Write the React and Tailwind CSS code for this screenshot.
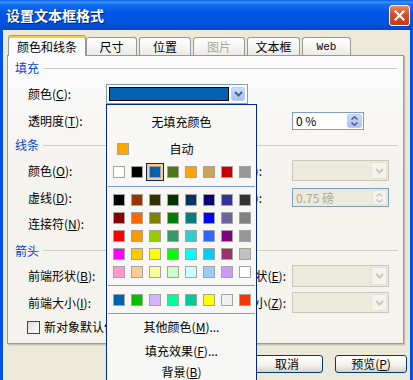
import React from 'react';

const recent = ['#ffffff', '#000000', '#0063b1', '#4e7419', '#ffa500', '#c9a45c', '#c80000', '#999999'];
const grid = [
  ['#000000', '#993300', '#333300', '#003300', '#003366', '#000080', '#333399', '#333333'],
  ['#800000', '#ff6600', '#808000', '#008000', '#008080', '#0000ff', '#666699', '#808080'],
  ['#ff0000', '#ff9900', '#99cc00', '#339966', '#33cccc', '#3366ff', '#800080', '#969696'],
  ['#ff00ff', '#ffcc00', '#ffff00', '#00ff00', '#00ffff', '#00ccff', '#993366', '#c0c0c0'],
  ['#ff99cc', '#ffcc99', '#ffff99', '#ccffcc', '#ccffff', '#99ccff', '#cc99ff', '#ffffff'],
];
const custom = ['#0063b1', '#00c000', '#d4b4ff', '#00ff99', '#00cc99', '#ffff00', '#f0f0f0', '#ff3300'];

const U = ({ c }) => (
  <span>
    (<span className="underline">{c}</span>)
  </span>
);

function Swatch({ color, selected }) {
  return (
    <div className="relative w-[12px] h-[12px]">
      {selected && <div className="absolute -inset-[3px] border border-[#0a246a] bg-[#ffc98a]" />}
      <div className="relative w-[12px] h-[12px] border border-[#a6a39a]" style={{ backgroundColor: color }} />
    </div>
  );
}

function SwatchRow({ colors, selectedIndex, className }) {
  return (
    <div className={'flex gap-[6px] pl-[6px] h-[12px] ' + (className || '')}>
      {colors.map((c, i) => (
        <Swatch key={i} color={c} selected={i === selectedIndex} />
      ))}
    </div>
  );
}

function Chevron({ color }) {
  return (
    <svg width="9" height="6" viewBox="0 0 9 6">
      <path d="M1 1 L4.5 4.5 L8 1" fill="none" stroke={color} strokeWidth="2" />
    </svg>
  );
}

function SpinArrows({ color }) {
  return (
    <div className="flex flex-col items-center gap-[2px]">
      <svg width="7" height="4" viewBox="0 0 7 4">
        <path d="M0.5 3.5 L3.5 0.8 L6.5 3.5" fill="none" stroke={color} strokeWidth="1.5" />
      </svg>
      <svg width="7" height="4" viewBox="0 0 7 4">
        <path d="M0.5 0.5 L3.5 3.2 L6.5 0.5" fill="none" stroke={color} strokeWidth="1.5" />
      </svg>
    </div>
  );
}

function Section({ label, hClass }) {
  return (
    <div className={'flex items-center pl-[7px] pr-[5px] ' + hClass}>
      <span className="text-[#0046d5] whitespace-nowrap">{label}</span>
      <div className="flex-1 h-px bg-[#d0d0bf] ml-[4px]" />
    </div>
  );
}

function Label({ children }) {
  return <div className="w-[78px] shrink-0 whitespace-nowrap">{children}</div>;
}

function DisabledCombo({ hClass }) {
  return (
    <div className={'w-[97px] shrink-0 border border-[#c9c7ba] bg-[#ebeadb] flex justify-end p-[1px] ' + hClass}>
      <div className="w-[16px] h-full rounded-[2px] bg-[#f4f3ee] border border-[#e4e2d6] flex items-center justify-center">
        <Chevron color="#c9c7ba" />
      </div>
    </div>
  );
}

function HiddenCombo({ hClass }) {
  return <div className={'w-[142px] shrink-0 border border-[#c9c7ba] bg-[#ebeadb] ' + hClass} />;
}

function RightLabel({ children, prClass }) {
  return (
    <div className={'w-[44px] shrink-0 flex justify-end whitespace-nowrap ' + prClass}>
      <span>{children}</span>
    </div>
  );
}

function XPButton({ children }) {
  return (
    <div className="h-[18px] w-[72px] rounded-[3px] border border-[#003c74] bg-[linear-gradient(180deg,#ffffff,#f3f2ec_55%,#d8d3c8)] flex items-center justify-center">
      {children}
    </div>
  );
}

export default function App() {
  return (
    <div className="relative w-[413px] h-[380px] overflow-hidden bg-[#0052e0] text-[12px] leading-[14px] text-black font-['Noto_Sans_CJK_SC','Noto_Sans',sans-serif]">
      {/* Title bar */}
      <div className="h-[30px] flex items-center justify-between pl-[6px] pr-[3px] bg-[linear-gradient(180deg,#0a5be5_0%,#3d93f8_7%,#1570f0_15%,#0058e6_40%,#0052dc_80%,#0846c4_100%)]">
        <span className="text-white font-bold text-[14px] [text-shadow:1px_1px_0_#0a1f66]">设置文本框格式</span>
        <div className="w-[21px] h-[21px] rounded-[3px] border border-white bg-[linear-gradient(180deg,#ec8866,#d4502c_45%,#c23c16)] flex items-center justify-center">
          <svg width="11" height="11" viewBox="0 0 11 11">
            <path d="M1.5 1.5 L9.5 9.5 M9.5 1.5 L1.5 9.5" stroke="#ffffff" strokeWidth="2.2" strokeLinecap="square" />
          </svg>
        </div>
      </div>

      {/* Body */}
      <div className="mx-[3px] h-[350px] bg-[#ece9d8] pt-[5px] pl-[4px] pr-[3px]">
        {/* Tabs */}
        <div className="flex items-end h-[20px]">
          <div className="relative z-10 -mb-px ml-[1px] w-[78px] h-[21px] rounded-t-[3px] border-x border-t border-[#919b9c] border-t-[#e68b2c] shadow-[inset_0_2px_0_#ffc73c] bg-[#fcfcfe] flex items-center justify-center pt-[2px]">
            颜色和线条
          </div>
          <div className="w-[51px] h-[18px] rounded-t-[3px] border-x border-t border-[#919b9c] bg-[linear-gradient(180deg,#ffffff,#ecebe6)] flex items-center justify-center">
            尺寸
          </div>
          <div className="ml-[2px] w-[52px] h-[18px] rounded-t-[3px] border-x border-t border-[#919b9c] bg-[linear-gradient(180deg,#ffffff,#ecebe6)] flex items-center justify-center">
            位置
          </div>
          <div className="ml-[2px] w-[52px] h-[18px] rounded-t-[3px] border-x border-t border-[#919b9c] bg-[linear-gradient(180deg,#ffffff,#ecebe6)] flex items-center justify-center text-[#aca899]">
            图片
          </div>
          <div className="ml-[2px] w-[53px] h-[18px] rounded-t-[3px] border-x border-t border-[#919b9c] bg-[linear-gradient(180deg,#ffffff,#ecebe6)] flex items-center justify-center">
            文本框
          </div>
          <div className="ml-[2px] w-[49px] h-[18px] rounded-t-[3px] border-x border-t border-[#919b9c] bg-[linear-gradient(180deg,#ffffff,#ecebe6)] flex items-center justify-center font-['Liberation_Mono',monospace] text-[11px]">
            Web
          </div>
        </div>

        {/* Panel */}
        <div className="w-[397px] h-[289px] border border-[#919b9c] bg-[linear-gradient(180deg,#fcfcfe,#f4f3ee_40%)] shadow-[1px_1px_0_#c5c2b2,2px_2px_0_#dedbcb]">
          <Section label="填充" hClass="h-[24px]" />
          <div className="flex items-center h-[27px] pl-[20px]">
            <Label>
              颜色<U c="C" />:
            </Label>
            <div className="w-[142px] h-[20px] border border-[#7f9db9] bg-white flex p-[2px] gap-[2px]">
              <div className="flex-1 border border-black bg-[#0063b1]" />
              <div className="w-[14px] rounded-[2px] border border-[#b9cdf8] bg-[linear-gradient(180deg,#cddcfc,#a6bff5)] flex items-center justify-center">
                <Chevron color="#4d6185" />
              </div>
            </div>
          </div>
          <div className="flex items-center h-[27px] pl-[20px]">
            <Label>
              透明度<U c="T" />:
            </Label>
            <div className="w-[186px] shrink-0" />
            <div className="w-[72px] h-[18px] border border-[#7f9db9] bg-white flex items-center justify-between pl-[3px] p-[1px]">
              <span>0 %</span>
              <div className="w-[15px] h-full rounded-[2px] border border-[#b9cdf8] bg-[linear-gradient(180deg,#cddcfc,#a6bff5)] flex items-center justify-center">
                <SpinArrows color="#4d6185" />
              </div>
            </div>
          </div>

          <Section label="线条" hClass="h-[22px]" />
          <div className="flex items-center h-[29px] pl-[20px]">
            <Label>
              颜色<U c="O" />:
            </Label>
            <HiddenCombo hClass="h-[21px]" />
            <RightLabel prClass="pr-[30px]">
              样式<U c="S" />:
            </RightLabel>
            <DisabledCombo hClass="h-[21px]" />
          </div>
          <div className="flex items-center h-[25px] pl-[20px]">
            <Label>
              虚线<U c="D" />:
            </Label>
            <HiddenCombo hClass="h-[19px]" />
            <RightLabel prClass="pr-[30px]">
              粗细<U c="W" />:
            </RightLabel>
            <div className="w-[97px] h-[19px] border border-[#7f9db9] bg-[#ebeadb] flex items-center justify-between pl-[3px] p-[1px] text-[#aca899]">
              <span>0.75 磅</span>
              <div className="w-[15px] h-full rounded-[2px] bg-[#f4f3ee] border border-[#e4e2d6] flex items-center justify-center">
                <SpinArrows color="#c9c7ba" />
              </div>
            </div>
          </div>
          <div className="flex items-center h-[27px] pl-[20px]">
            <Label>
              连接符<U c="N" />:
            </Label>
            <HiddenCombo hClass="h-[20px]" />
          </div>

          <Section label="箭头" hClass="h-[27px]" />
          <div className="flex items-center h-[24px] pl-[20px]">
            <Label>
              前端形状<U c="B" />:
            </Label>
            <HiddenCombo hClass="h-[22px]" />
            <RightLabel prClass="pr-[6px]">
              后端形状<U c="E" />:
            </RightLabel>
            <DisabledCombo hClass="h-[22px]" />
          </div>
          <div className="flex items-center h-[29px] pl-[20px]">
            <Label>
              前端大小<U c="I" />:
            </Label>
            <HiddenCombo hClass="h-[21px]" />
            <RightLabel prClass="pr-[6px]">
              后端大小<U c="Z" />:
            </RightLabel>
            <DisabledCombo hClass="h-[21px]" />
          </div>
          <div className="flex items-center h-[20px] pl-[19px]">
            <div className="w-[13px] h-[13px] border border-[#1c5180] bg-[linear-gradient(135deg,#dcdcd7,#ffffff)]" />
            <span className="ml-[4px] whitespace-nowrap">
              新对象默认值<U c="F" />
            </span>
          </div>
        </div>

        {/* Buttons (the first one lies under the open colour menu) */}
        <div className="mt-[11px] flex justify-end gap-[12px]">
          <XPButton />
          <XPButton>取消</XPButton>
          <XPButton>
            预览<U c="P" />
          </XPButton>
        </div>
      </div>

      {/* Color popup */}
      <div className="absolute left-[106px] top-[104px] w-[151px] h-[290px] border border-[#00288c] bg-[#f7f7f5]">
        <div className="h-[34px] flex items-center justify-center">无填充颜色</div>
        <div className="h-[19px] flex items-center pr-[22px]">
          <div className="ml-[10px] w-[12px] h-[12px] border border-[#a6a39a] bg-[#ffa500]" />
          <div className="flex-1 text-center">自动</div>
        </div>
        <SwatchRow colors={recent} selectedIndex={2} className="mt-[8px]" />
        <div className="mt-[8px] mx-[1px] h-px bg-[#7c9bd3]" />
        <div className="mt-[7px] flex flex-col gap-[6px]">
          {grid.map((row, i) => (
            <SwatchRow key={i} colors={row} />
          ))}
        </div>
        <div className="mt-[7px] mx-[1px] h-px bg-[#7c9bd3]" />
        <SwatchRow colors={custom} className="mt-[8px]" />
        <div className="mt-[7px] mx-[1px] h-px bg-[#7c9bd3]" />
        <div className="h-[26px] flex items-center justify-center">
          其他颜色<U c="M" />...
        </div>
        <div className="h-[22px] flex items-center justify-center">
          填充效果<U c="F" />...
        </div>
        <div className="h-[20px] flex items-center justify-center">
          背景<U c="B" />
        </div>
      </div>
    </div>
  );
}
